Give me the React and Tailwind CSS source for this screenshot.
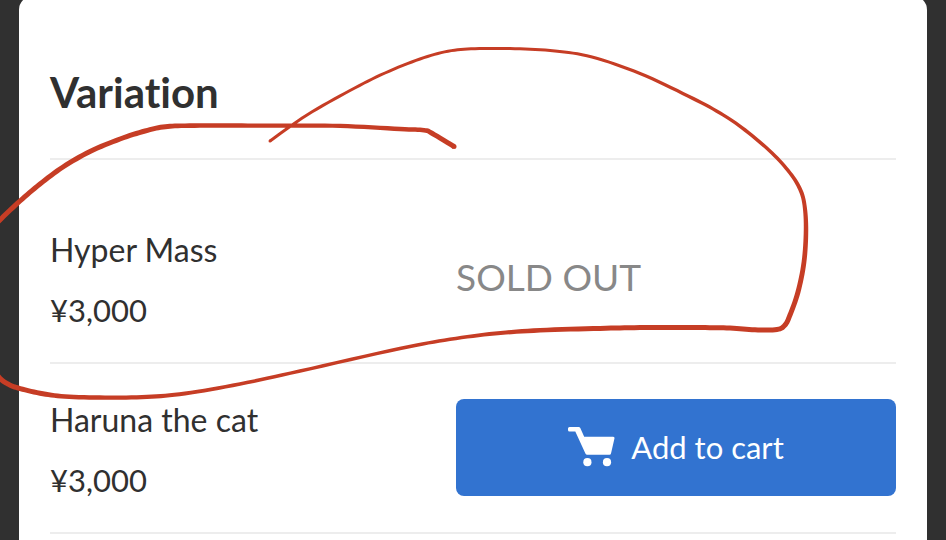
import React from 'react';

const items = [
  { name: 'Hyper Mass', price: '¥3,000', soldOut: true },
  { name: 'Haruna the cat', price: '¥3,000', soldOut: false },
];

// Pen stroke: x, y, thickness
const penPoints = [
  [270, 141, 3], [307, 115, 3], [350, 90.5, 3], [385, 73, 3], [420, 59, 3],
  [448, 51.2, 3], [475, 48.7, 3], [515, 48.7, 3], [555, 51, 3], [592, 57, 3], [640, 73.5, 3.2],
  [688, 96, 3.4], [720, 113, 3.4], [745, 130, 3.5], [772, 153, 3.5], [790, 173, 3.6], [800, 189, 4],
  [804.5, 205, 4], [806, 230, 4.5], [804, 262, 4.8], [798, 292, 5], [790, 315, 5], [785, 325, 5],
  [777, 329.5, 5], [755, 329.8, 5], [730, 328, 5], [700, 327.6, 5], [640, 327.6, 5], [600, 328.4, 5],
  [540, 330.3, 4.6], [495, 333.5, 4], [450, 339.3, 3.5], [400, 348.5, 3.5], [300, 371, 3.4], [240, 384, 3.6],
  [185, 393.5, 4], [147, 396.9, 4.2], [105, 397.6, 4.4], [65, 396.5, 4.6], [40, 393.2, 5], [18, 388, 5],
  [8, 384, 5], [-2, 376, 5], [-20, 350, 5], [-28, 290, 5], [-18, 240, 5], [1, 219, 5],
  [20, 201, 5], [40, 184, 5], [63, 167, 5], [90, 151.5, 5], [120, 139, 5], [145, 131, 5],
  [163, 127, 5], [185, 125.7, 4.6], [230, 125.6, 4.5], [280, 125.6, 4.2], [340, 125.9, 4.2],
  [400, 129, 4.5], [424, 130.2, 4.5], [432, 133.3, 5], [454, 146.5, 5],
];

const curve = (a, b, c, d, t) =>
  0.5 * (2 * b + (c - a) * t + (2 * a - 5 * b + 4 * c - d) * t * t + (3 * b - a - 3 * c + d) * t * t * t);

const samplePen = (points) => {
  const out = [];
  for (let i = 0; i < points.length - 1; i++) {
    const p0 = points[Math.max(i - 1, 0)];
    const p1 = points[i];
    const p2 = points[i + 1];
    const p3 = points[Math.min(i + 2, points.length - 1)];
    for (let s = 0; s < 8; s++) {
      const t = s / 8;
      out.push([
        curve(p0[0], p1[0], p2[0], p3[0], t),
        curve(p0[1], p1[1], p2[1], p3[1], t),
        p1[2] + (p2[2] - p1[2]) * t,
      ]);
    }
  }
  out.push(points[points.length - 1]);
  return out;
};

// Walk along one side of the stroke and back along the other
const penOutline = (line) => {
  const left = [];
  const right = [];
  line.forEach(([x, y, w], i) => {
    const prev = line[Math.max(i - 1, 0)];
    const next = line[Math.min(i + 1, line.length - 1)];
    const dx = next[0] - prev[0];
    const dy = next[1] - prev[1];
    const len = Math.hypot(dx, dy) || 1;
    const nx = (-dy / len) * (w / 2);
    const ny = (dx / len) * (w / 2);
    left.push(`${(x + nx).toFixed(2)} ${(y + ny).toFixed(2)}`);
    right.unshift(`${(x - nx).toFixed(2)} ${(y - ny).toFixed(2)}`);
  });
  return `M${left.concat(right).join('L')}Z`;
};

const PenMark = () => {
  const line = samplePen(penPoints);
  const start = line[0];
  const end = line[line.length - 1];
  return (
    <svg
      viewBox="0 0 946 540"
      className="absolute top-0 left-0 w-full pointer-events-none"
      fill="#c63d25"
      aria-hidden="true"
    >
      <path d={penOutline(line)} />
      <circle cx={start[0]} cy={start[1]} r={start[2] / 2} />
      <circle cx={end[0]} cy={end[1]} r={end[2] / 2} />
    </svg>
  );
};

const CartIcon = () => (
  <svg viewBox="0 0 47 40" className="w-[47px] h-10 shrink-0" fill="currentColor" aria-hidden="true">
    <path d="M1.5 0H10.6Q11.8 0 12.3 1L16.2 9.8H45.2Q46.8 9.8 46.5 11.3L43 26.6Q42.7 27.8 41.5 27.8H19.2Q18 27.8 17.4 26.6L7.3 4.4H1.5Q0 4.4 0 2.9V1.5Q0 0 1.5 0Z" />
    <circle cx="19.4" cy="35.2" r="4.1" />
    <circle cx="39" cy="35.2" r="4.1" />
  </svg>
);

const VariationRow = ({ item }) => (
  <li className="flex items-start border-b-2 border-[#ededed] pt-[35px] pb-8">
    <div className="w-[48%] flex flex-col gap-5 pt-px">
      <p className="text-[32px] leading-10">{item.name}</p>
      <p className="text-[31px] leading-10">{item.price}</p>
    </div>
    {item.soldOut ? (
      <p className="w-[52%] text-[37px] leading-[96px] text-[#888888]">SOLD OUT</p>
    ) : (
      <button
        type="button"
        className="w-[52%] h-[97px] flex items-center justify-center gap-4 rounded-lg bg-[#3273d0] pb-0.5 text-white text-[31px] leading-10 cursor-pointer"
      >
        <CartIcon />
        Add to cart
      </button>
    )}
  </li>
);

const App = () => {
  return (
    <div className="relative flex min-h-screen flex-col overflow-hidden bg-[#303030] px-[19px] font-['Lato',sans-serif] text-[#303030] [font-variant-ligatures:none]">
      <main className="-mt-1 flex-1 rounded-t-[14px] bg-white px-[31px] pt-[72px]">
        <h1 className="border-b-2 border-[#ededed] pb-[42px] text-[42px] leading-12 font-bold">Variation</h1>
        <ul className="pt-[34px]">
          {items.map((item) => (
            <VariationRow key={item.name} item={item} />
          ))}
        </ul>
      </main>
      <PenMark />
    </div>
  );
};

export default App;
